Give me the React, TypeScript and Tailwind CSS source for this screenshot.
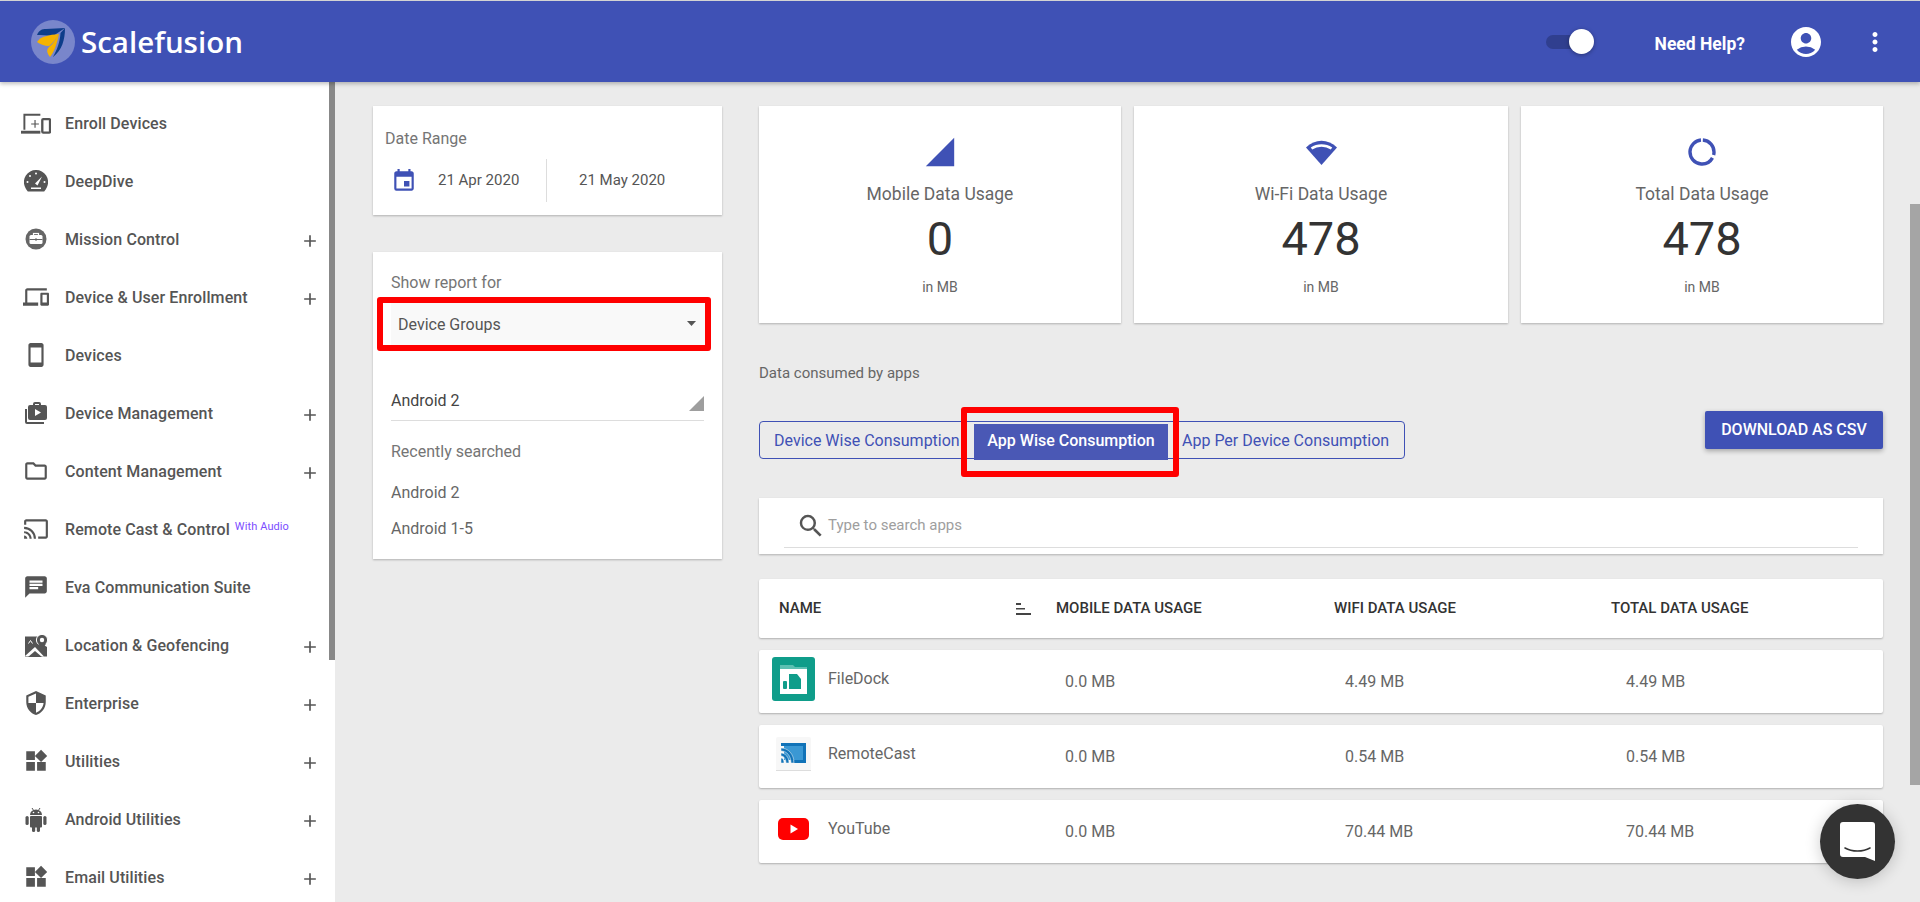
import {
  MdAccountCircle,
  MdAdd,
  MdChat,
  MdDevices,
  MdEvent,
  MdMoreVert,
  MdOutlineCast,
  MdOutlineFolder,
  MdOutlineSmartphone,
  MdSearch,
  MdSecurity,
  MdSignalCellular4Bar,
  MdWidgets,
} from 'react-icons/md';
import type { ReactNode } from 'react';

function EnrollIcon() {
  return (
    <svg width="31" height="21" viewBox="0 0 31 21" fill="none" stroke="#555">
      <path d="M3.500 17V1.500H20" strokeWidth="2" />
      <path d="M0 19.500h20" strokeWidth="3" />
      <path d="M14.500 7v8M10.500 11h8" strokeWidth="1.200" />
      <rect x="22" y="6" width="8" height="14" rx="1" strokeWidth="2.400" />
    </svg>
  );
}

function GaugeIcon() {
  return (
    <svg width="24" height="22" viewBox="0 0 24 22">
      <path d="M12 0a12 12 0 0 1 11 17c-.6 1.500-1.500 3-2.800 4.500H3.800C2.500 20 1.600 18.500 1 17A12 12 0 0 1 12 0z" fill="#555" />
      <path d="M11 13.500L18 6.500l-4.500 9z" fill="#fff" />
      <g fill="#fff">
        <circle cx="12" cy="3.500" r="1" />
        <circle cx="6" cy="6" r="1" />
        <circle cx="3.500" cy="12" r="1" />
        <circle cx="20.500" cy="12" r="1" />
        <rect x="7" y="17.500" width="10" height="1.500" />
      </g>
    </svg>
  );
}

function MissionIcon() {
  return (
    <svg width="22" height="22" viewBox="0 0 22 22">
      <circle cx="11" cy="11" r="10.500" fill="#666" />
      <rect x="4.500" y="7" width="13" height="9" rx="1.500" fill="#fff" />
      <rect x="8.500" y="5.500" width="5" height="2.500" fill="none" stroke="#fff" strokeWidth="1.200" />
      <rect x="4.500" y="11" width="13" height="1" fill="#666" />
      <rect x="10" y="10.500" width="2" height="2" fill="#666" />
    </svg>
  );
}

function ManageIcon() {
  return (
    <svg width="24" height="22" viewBox="0 0 24 22" fill="#555">
      <path d="M1 7h2v13h17v2H3a2 2 0 0 1-2-2z" />
      <path d="M9 3V2a2 2 0 0 1 2-2h4a2 2 0 0 1 2 2v1h4a2 2 0 0 1 2 2v11a2 2 0 0 1-2 2H6a2 2 0 0 1-2-2V5a2 2 0 0 1 2-2zm2 0h4V2h-4z" fillRule="evenodd" />
      <path d="M11 7l6 3.500-6 3.500z" fill="#fff" />
    </svg>
  );
}

function MapPinIcon() {
  return (
    <svg width="23" height="23" viewBox="0 0 23 23">
      <path d="M0 2.500h14v20H0z" fill="#555" />
      <path d="M14 8l8 5v9.500h-8z" fill="#555" />
      <path d="M0 22l10-9 9 9.500z" fill="#fff" />
      <path d="M3 23l7-6 7 6z" fill="#555" />
      <circle cx="17" cy="6" r="5.600" fill="#555" stroke="#fff" strokeWidth="1" />
      <circle cx="17" cy="6" r="2.200" fill="#fff" />
      <path d="M13 9.500L17 17l4-7.500z" fill="#555" />
      <path d="M3.500 9.500l2-3M5.500 6.500l2 3" stroke="#fff" strokeWidth="1" />
    </svg>
  );
}

function AndroidIcon() {
  return (
    <svg width="22" height="25" viewBox="0 0 22 25" fill="#555">
      <path d="M5 8a6 5.500 0 0 1 12 0z" />
      <path d="M7 1l2 3M15 1l-2 3" stroke="#555" strokeWidth="1" />
      <circle cx="8.500" cy="5.500" r=".8" fill="#fff" />
      <circle cx="13.500" cy="5.500" r=".8" fill="#fff" />
      <rect x="5" y="9" width="12" height="11.500" rx="1" />
      <rect x="0.500" y="9" width="3.200" height="9" rx="1.600" />
      <rect x="18.300" y="9" width="3.200" height="9" rx="1.600" />
      <rect x="7" y="18" width="3.200" height="7" rx="1.600" />
      <rect x="11.800" y="18" width="3.200" height="7" rx="1.600" />
    </svg>
  );
}

const navItems: { label: string; icon: ReactNode; more?: boolean; badge?: string }[] = [
  { label: 'Enroll Devices', icon: <EnrollIcon /> },
  { label: 'DeepDive', icon: <GaugeIcon /> },
  { label: 'Mission Control', icon: <MissionIcon />, more: true },
  { label: 'Device & User Enrollment', icon: <MdDevices size={26} color="#555" />, more: true },
  { label: 'Devices', icon: <MdOutlineSmartphone size={26} color="#555" /> },
  { label: 'Device Management', icon: <ManageIcon />, more: true },
  { label: 'Content Management', icon: <MdOutlineFolder size={26} color="#555" />, more: true },
  { label: 'Remote Cast & Control', icon: <MdOutlineCast size={26} color="#555" />, badge: 'With Audio' },
  { label: 'Eva Communication Suite', icon: <MdChat size={26} color="#555" /> },
  { label: 'Location & Geofencing', icon: <MapPinIcon />, more: true },
  { label: 'Enterprise', icon: <MdSecurity size={26} color="#555" />, more: true },
  { label: 'Utilities', icon: <MdWidgets size={26} color="#555" />, more: true },
  { label: 'Android Utilities', icon: <AndroidIcon />, more: true },
  { label: 'Email Utilities', icon: <MdWidgets size={26} color="#555" />, more: true },
];

function WifiIcon() {
  return (
    <svg width="31" height="25" viewBox="0 0 31 25">
      <path d="M15.500 25L0 7.500C9-1.500 22-1.500 31 7.500z" fill="#3f51b5" />
      <path d="M5.500 8.500c6-4 14-4 20 0" fill="none" stroke="#fff" strokeWidth="2.600" />
    </svg>
  );
}

function DonutIcon() {
  return (
    <svg width="28" height="28" viewBox="0 0 28 28" fill="none" stroke="#3f51b5" strokeWidth="3.400">
      <circle cx="14" cy="14" r="12" transform="rotate(-86 14 14)" strokeDasharray="21 3 49 2.400" />
    </svg>
  );
}

const stats = [
  { title: 'Mobile Data Usage', value: '0', width: 'w-[362px]', icon: <MdSignalCellular4Bar size={34} color="#3f51b5" /> },
  { title: 'Wi-Fi Data Usage', value: '478', width: 'w-[374px]', icon: <WifiIcon /> },
  { title: 'Total Data Usage', value: '478', width: 'w-[362px]', icon: <DonutIcon /> },
];

function FileDockIcon() {
  return (
    <svg width="43" height="44" viewBox="0 0 43 44">
      <rect width="43" height="44" rx="3" fill="#0f9d8a" />
      <path d="M8 8h13l2 2h12v2H8z" fill="#5cc0b2" />
      <rect x="8" y="12" width="27" height="25" fill="#fff" />
      <path d="M17 17h8l4 5v10H17z" fill="#0f9d8a" />
      <rect x="11" y="24" width="4" height="8" rx="1" fill="#0f9d8a" />
    </svg>
  );
}

function RemoteCastIcon() {
  return (
    <svg width="35" height="34" viewBox="0 0 35 34">
      <rect width="35" height="34" rx="2" fill="#f7f7f7" />
      <path d="M0 33h35v1H0z" fill="#ddd" />
      <path d="M5 9V6h25v20H18v-3h9V9z" fill="#1173b8" />
      <rect x="8" y="9" width="19" height="14" fill="#3a98d4" />
      <path d="M5 11c7 0 13 6 13 15h-3c0-7-4-12-10-12zm0 5c4 0 8 4 8 10h-3c0-4-2-7-5-7zm0 5c2 0 3 2 3 5H5z" fill="#1173b8" stroke="#f7f7f7" strokeWidth=".5" />
    </svg>
  );
}

function YoutubeIcon() {
  return (
    <svg width="31" height="22" viewBox="0 0 31 22">
      <rect width="31" height="22" rx="5" fill="#f00" />
      <path d="M12.500 6.500l7.500 4.500-7.500 4.500z" fill="#fff" />
    </svg>
  );
}

const apps = [
  { name: 'FileDock', mobile: '0.0 MB', wifi: '4.49 MB', total: '4.49 MB', icon: <FileDockIcon /> },
  { name: 'RemoteCast', mobile: '0.0 MB', wifi: '0.54 MB', total: '0.54 MB', icon: <RemoteCastIcon /> },
  { name: 'YouTube', mobile: '0.0 MB', wifi: '70.44 MB', total: '70.44 MB', icon: <YoutubeIcon /> },
];

function Logo() {
  return (
    <div className="flex items-center gap-[6px]">
      <svg width="44" height="44" viewBox="0 0 44 44">
        <circle cx="22" cy="22" r="22" fill="#7986cb" />
        <path d="M6 15C8 10 11 9 15 9L34 8 22 16C15 15 10 15 6 15z" fill="#0d3d8a" />
        <path d="M6 22C10 16 18 15 28 14 25 19 22 23 18 26 13 26 9 24 6 22z" fill="#f5b301" />
        <path d="M28 14C26 24 23 32 19 37 16 33 15 30 18 27 22 24 25 19 28 14z" fill="#f5b301" />
        <path d="M34 8C34 20 31 30 22 37 26 30 29 22 29.500 13z" fill="#0d3d8a" />
      </svg>
      <span className="font-['Open_Sans',sans-serif] text-[29.500px] font-semibold leading-none text-white">Scalefusion</span>
    </div>
  );
}

export default function App() {
  return (
    <div className="relative flex h-[902px] w-full flex-col overflow-hidden bg-[#ebebeb] font-['Roboto',sans-serif]">
      <div className="h-px shrink-0 bg-[#d9d9d9]" />

      {/* Top bar */}
      <header className="relative z-10 flex h-[81px] shrink-0 items-center justify-between bg-[#3f51b5] pl-[31px] pr-[30px] shadow-[0_2px_4px_rgba(0,0,0,0.25)]">
        <Logo />
        <div className="flex items-center">
          <div className="relative mr-[79px] h-[14px] w-[30px] rounded-full bg-[#303f8f]">
            <div className="absolute -top-[6px] left-[23px] size-[25px] rounded-full bg-white shadow-[0_1px_4px_rgba(0,0,0,0.35)]" />
          </div>
          <span className="mr-[43px] pt-[5px] text-[17.500px] font-bold text-white">Need Help?</span>
          <MdAccountCircle size={36} color="#fff" className="mr-[36px]" />
          <MdMoreVert size={30} color="#fff" />
        </div>
      </header>

      <div className="flex min-h-0 flex-1">
        {/* Sidebar */}
        <aside className="relative w-[335px] shrink-0 overflow-hidden bg-white pt-3">
          <div className="absolute right-0 top-0 h-[578px] w-[6px] bg-[#888]" />
          {navItems.map((item) => (
            <div key={item.label} className="flex h-[58px] items-center pl-[21px] pr-[15px]">
              <div className="flex w-[30px] justify-center">{item.icon}</div>
              <span className="ml-[14px] flex-1 pt-px text-[16px] font-medium tracking-[0.1px] text-[#555]">
                {item.label}
                {item.badge && <span className="ml-[5px] align-[5px] text-[11px] font-normal text-[#7c4dff]">{item.badge}</span>}
              </span>
              {item.more && <MdAdd size={20} color="#555" className="mt-1" />}
            </div>
          ))}
        </aside>

        {/* Main */}
        <main className="flex flex-1 gap-[37px] pl-[38px] pt-6">
          <div className="w-[349px] shrink-0">
            <section className="h-[109px] bg-white px-3 pt-[24px] shadow-[0_1px_2px_rgba(0,0,0,0.25)]">
              <p className="text-[16px] leading-[18px] text-[#757575]">Date Range</p>
              <div className="mt-[11px] flex h-[43px] items-center">
                <MdEvent size={26} color="#3f51b5" className="ml-[6px]" />
                <span className="ml-[21px] w-[108px] text-[15px] text-[#555]">21 Apr 2020</span>
                <div className="h-[43px] w-px bg-[#ddd]" />
                <span className="ml-[32px] text-[15px] text-[#555]">21 May 2020</span>
              </div>
            </section>

            <section className="relative mt-[37px] h-[307px] bg-white px-[18px] pt-[22px] shadow-[0_1px_2px_rgba(0,0,0,0.25)]">
              <p className="text-[16px] leading-[18px] text-[#757575]">Show report for</p>
              <div className="mt-[11px] flex h-[42px] w-[314px] items-center justify-between bg-[#f9f9f9] pl-[7px] pr-[9px] pt-[2px]">
                <span className="text-[16px] text-[#555]">Device Groups</span>
                <svg width="9" height="5" viewBox="0 0 9 5" className="mb-1">
                  <path d="M0 0h9L4.500 5z" fill="#555" />
                </svg>
              </div>
              <div className="absolute left-1 top-[45px] h-[54px] w-[334px] rounded-[3px] border-[6px] border-[#f00]" />
              <div className="mt-[36px] flex h-[40px] items-start justify-between border-b border-[#ddd] pt-[11px]">
                <span className="text-[16px] leading-[18px] text-[#444]">Android 2</span>
                <svg width="15" height="15" viewBox="0 0 15 15" className="mt-[4px]">
                  <path d="M15 0v15H0z" fill="#9e9e9e" />
                </svg>
              </div>
              <p className="mt-[22px] text-[16px] leading-[18px] text-[#757575]">Recently searched</p>
              <p className="mt-[23px] text-[16px] leading-[18px] text-[#666]">Android 2</p>
              <p className="mt-[18px] text-[16px] leading-[18px] text-[#666]">Android 1-5</p>
            </section>
          </div>

          <div className="w-[1124px] shrink-0">
            <div className="flex justify-between">
              {stats.map((s) => (
                <section key={s.title} className={`flex h-[217px] flex-col items-center bg-white pt-[29px] shadow-[0_1px_2px_rgba(0,0,0,0.25)] ${s.width}`}>
                  <div className="flex h-[34px] items-center justify-center">{s.icon}</div>
                  <p className="mt-[14px] text-[17.500px] leading-[22px] text-[#666]">{s.title}</p>
                  <p className="mt-[6px] text-[47px] leading-[56px] text-[#333]">{s.value}</p>
                  <p className="mt-[11px] text-[14px] leading-[18px] text-[#666]">in MB</p>
                </section>
              ))}
            </div>

            <p className="mt-[41px] text-[15px] leading-[18px] text-[#666]">Data consumed by apps</p>

            <div className="mt-[27px] flex items-start justify-between">
              <div className="relative mt-[12px] flex h-[38px] w-[646px] items-center rounded-[4px] border border-[#3f51b5] text-[16px] text-[#3f51b5]">
                <span className="ml-[14px] mt-px w-[200px] whitespace-nowrap">Device Wise Consumption</span>
                <span className="-mb-[3px] flex h-[36px] w-[194px] items-center justify-center bg-[#4a58b5] pb-[2px] font-medium text-white">App Wise Consumption</span>
                <span className="ml-[14px] mt-px">App Per Device Consumption</span>
                <div className="absolute -top-[15px] left-[201px] h-[70px] w-[218px] rounded-[3px] border-[6px] border-[#f00]" />
              </div>
              <button className="mt-[2px] h-[38px] w-[178px] rounded-[2px] bg-[#3f51b5] text-[16px] font-medium text-white shadow-[0_2px_5px_rgba(0,0,0,0.3)]">
                DOWNLOAD AS CSV
              </button>
            </div>

            <section className="mt-[39px] h-[56px] bg-white px-[25px] shadow-[0_1px_2px_rgba(0,0,0,0.25)]">
              <div className="flex h-[50px] items-center border-b border-[#ddd] pl-[12px] pt-[6px]">
                <MdSearch size={30} color="#555" />
                <span className="ml-[2px] text-[15px] text-[#9e9e9e]">Type to search apps</span>
              </div>
            </section>

            <section className="mt-[25px] grid h-[59px] grid-cols-[297px_278px_277px_1fr] items-center rounded-[2px] bg-white text-[15px] font-medium text-[#333] shadow-[0_1px_2px_rgba(0,0,0,0.25)]">
              <div className="flex items-center justify-between pl-5 pr-[25px]">
                <span>NAME</span>
                <svg width="15" height="12" viewBox="0 0 15 12" fill="#444">
                  <rect width="5" height="2" />
                  <rect y="5" width="9" height="1.500" />
                  <rect y="10" width="15" height="2" />
                </svg>
              </div>
              <span>MOBILE DATA USAGE</span>
              <span>WIFI DATA USAGE</span>
              <span>TOTAL DATA USAGE</span>
            </section>

            {apps.map((a) => (
              <section key={a.name} className="mt-3 grid h-[63px] grid-cols-[297px_278px_277px_1fr] items-center rounded-[2px] bg-white text-[16px] text-[#666] shadow-[0_1px_2px_rgba(0,0,0,0.25)]">
                <div className="flex items-center pb-[6px] pl-[13px]">
                  <div className="flex w-[43px] justify-center">{a.icon}</div>
                  <span className="ml-[13px]">{a.name}</span>
                </div>
                <span className="pl-[9px]">{a.mobile}</span>
                <span className="pl-[11px]">{a.wifi}</span>
                <span className="pl-[15px]">{a.total}</span>
              </section>
            ))}
          </div>
        </main>
      </div>

      {/* Page scrollbar */}
      <div className="absolute right-0 top-[204px] h-[581px] w-[10px] bg-[#a5a5a5]" />

      {/* Chat launcher */}
      <div className="absolute left-[1820px] top-[804px] flex size-[75px] items-center justify-center rounded-full bg-[#333] shadow-[0_2px_16px_rgba(0,0,0,0.2)]">
        <svg width="35" height="39" viewBox="0 0 35 39">
          <path d="M3 0h29a3 3 0 0 1 3 3v36l-10-4H3a3 3 0 0 1-3-3V3a3 3 0 0 1 3-3z" fill="#fff" />
          <path d="M5 26c7 4 18 4 25 0" fill="none" stroke="#333" strokeWidth="1.600" strokeLinecap="round" />
        </svg>
      </div>
    </div>
  );
}
